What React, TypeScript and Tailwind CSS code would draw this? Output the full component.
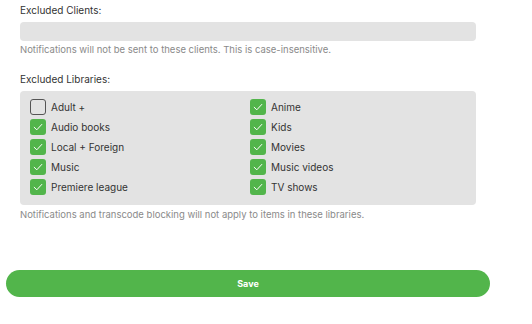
import React from "react";

const left = ["Adult +", "Audio books", "Local + Foreign", "Music", "Premiere league"];
const right = ["Anime", "Kids", "Movies", "Music videos", "TV shows"];
const checked: Record<string, boolean> = { "Adult +": false };

function Box({ on }: { on: boolean }) {
  if (!on) {
    return <div className="w-4 h-4 rounded-[3px] border border-[#555555] box-border shrink-0" />;
  }
  return (
    <div className="w-4 h-4 rounded-[3px] bg-[#52b54b] flex items-center justify-center shrink-0">
      <svg width="12" height="12" viewBox="0 0 12 12" fill="none">
        <path d="M2.2 6.3 L4.8 8.8 L9.8 3.4" stroke="#ffffff" strokeWidth="1" strokeLinecap="round" strokeLinejoin="round" />
      </svg>
    </div>
  );
}

function Item({ label }: { label: string }) {
  const on = checked[label] !== false;
  return (
    <div className="flex items-center gap-[5px] h-5">
      <Box on={on} />
      <span className="text-[10px] text-[#333333] leading-none">{label}</span>
    </div>
  );
}

export default function App() {
  return (
    <div className="w-[532px] h-[324px] bg-white font-['Inter',sans-serif] flex flex-col">
      <div className="px-[20px] w-[496px] flex flex-col">
        <div className="h-[20px] pt-[4px] text-[10px] text-[#333333] leading-[12px]">Excluded Clients:</div>
        <div className="mt-[2px] h-[19px] rounded-[4px] bg-[#e3e3e3]" />
        <div className="mt-[2px] text-[9.5px] leading-[14px] text-[#8a8a8a]">
          Notifications will not be sent to these clients. This is case-insensitive.
        </div>
        <div className="mt-[16px] h-[14px] text-[10px] text-[#333333] leading-[12px]">Excluded Libraries:</div>
        <div className="mt-[4px] rounded-[4px] bg-[#e3e3e3] pl-[10px] pt-[6px] pb-[8px] grid grid-cols-[220px_1fr]">
          <div className="flex flex-col">
            {left.map((l) => (
              <Item key={l} label={l} />
            ))}
          </div>
          <div className="flex flex-col">
            {right.map((l) => (
              <Item key={l} label={l} />
            ))}
          </div>
        </div>
        <div className="mt-[3px] text-[9.5px] leading-[14px] text-[#8a8a8a]">
          Notifications and transcode blocking will not apply to items in these libraries.
        </div>
      </div>
      <div className="pl-[6px] mt-[48px]">
        <button className="w-[484px] h-[27px] rounded-full bg-[#52b54b] text-white text-[9px] font-bold flex items-center justify-center">
          Save
        </button>
      </div>
    </div>
  );
}
